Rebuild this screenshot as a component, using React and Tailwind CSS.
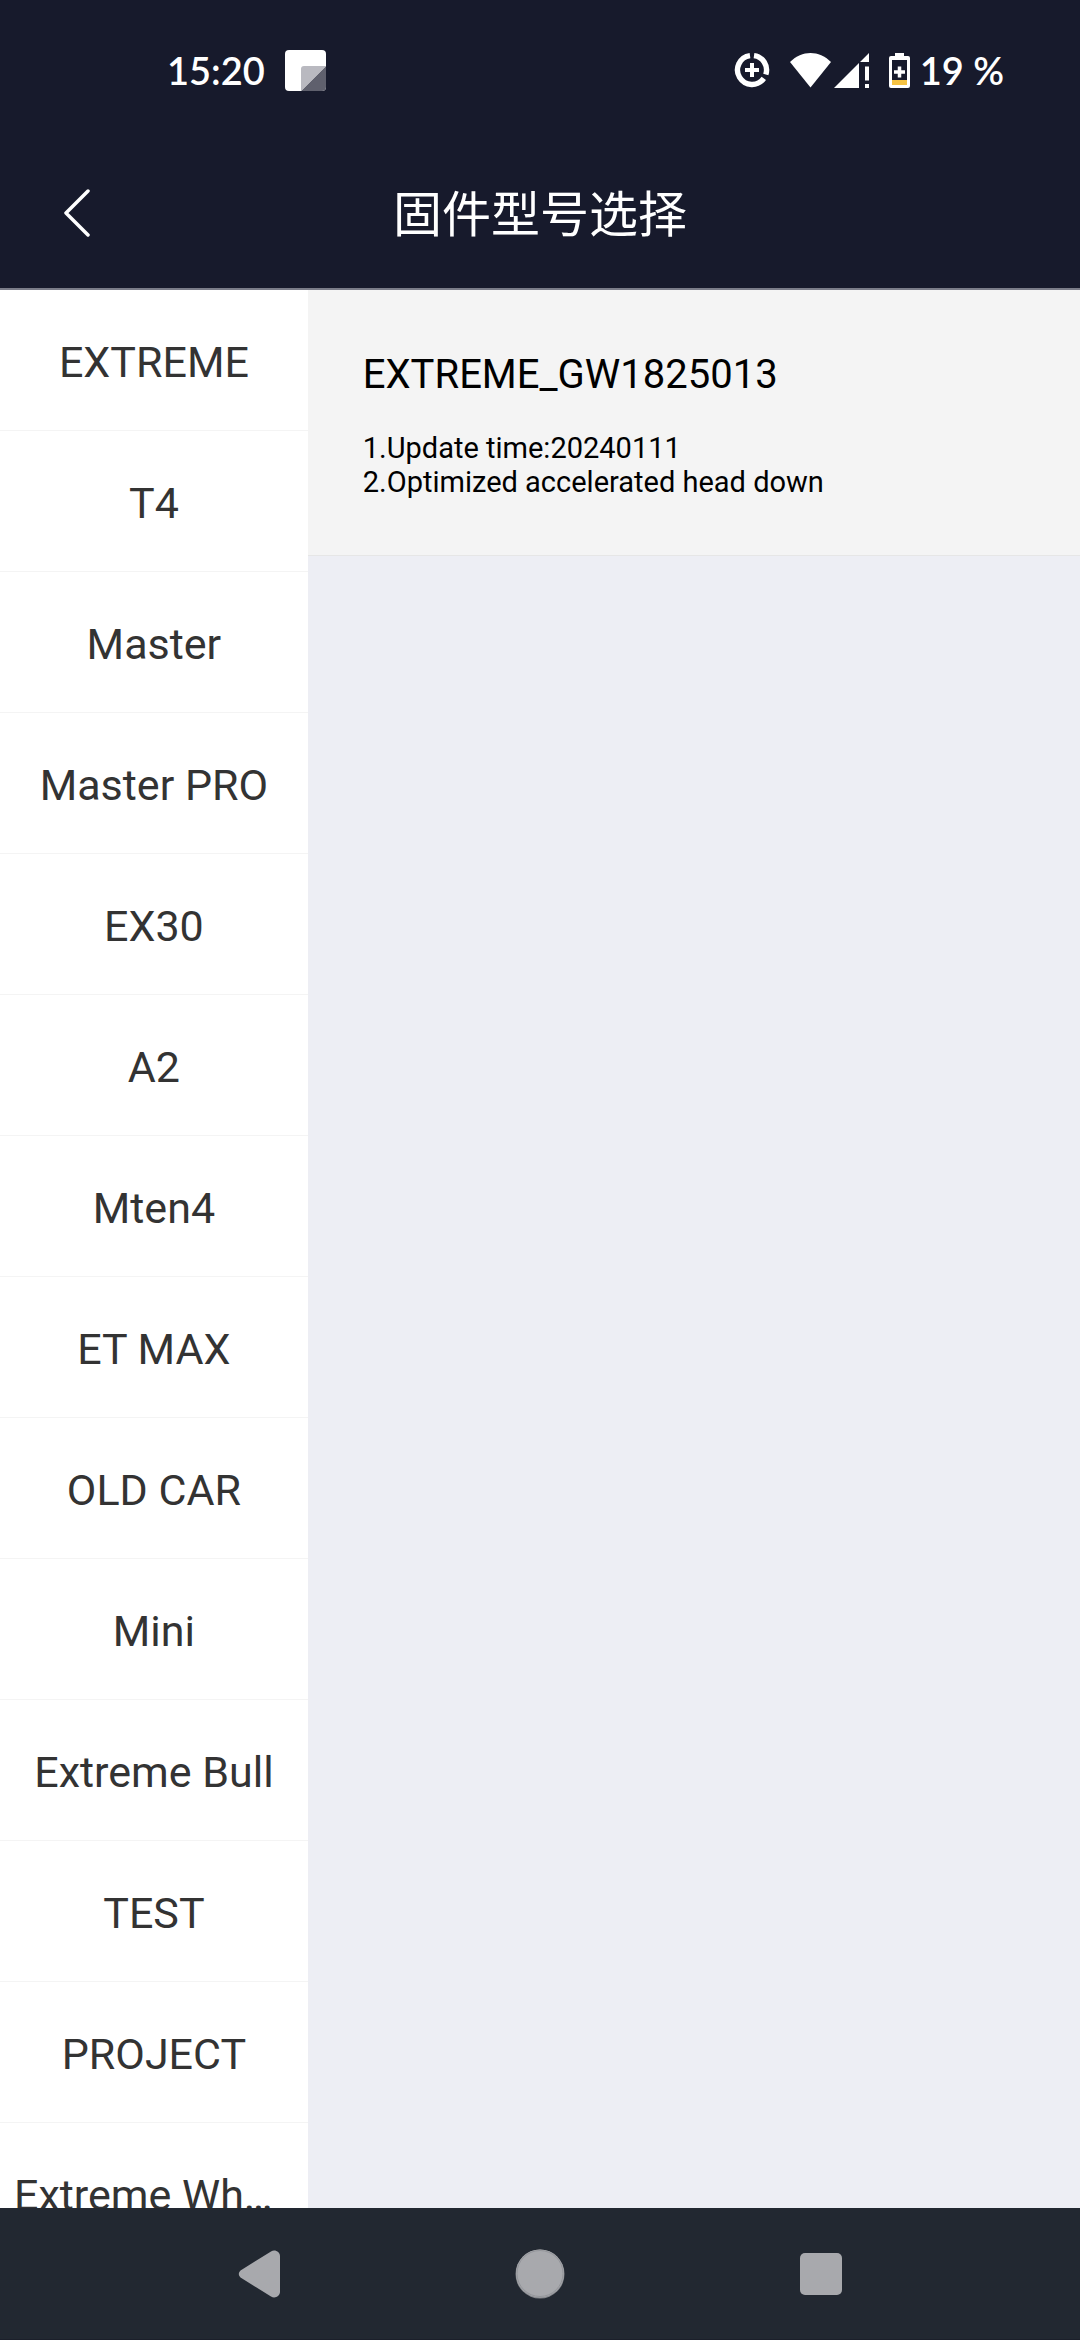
import React, { useState } from 'react';

const models = [
  'EXTREME',
  'T4',
  'Master',
  'Master PRO',
  'EX30',
  'A2',
  'Mten4',
  'ET MAX',
  'OLD CAR',
  'Mini',
  'Extreme Bull',
  'TEST',
  'PROJECT',
  'Extreme Wheel',
];

const firmwares = {
  EXTREME: [
    {
      name: 'EXTREME_GW1825013',
      notes: ['1.Update time:20240111', '2.Optimized accelerated head down'],
    },
  ],
};

const StatusBar = () => (
  <div className="flex h-[138px] shrink-0 items-center justify-between pt-[2px] pr-[76px] pl-[167px] text-white">
    <div className="flex items-center gap-5">
      <span className="font-['Lato',sans-serif] text-[38px] leading-none font-semibold">15:20</span>
      <svg width="41" height="41" viewBox="0 0 41 41">
        <rect width="41" height="41" rx="4" fill="#fff" />
        <path d="M41 16V37a4 4 0 0 1-4 4H16z" fill="#5f606d" />
        <path d="M16 41V19a3 3 0 0 1 3-3H41z" fill="#b9b9c0" />
      </svg>
    </div>

    <div className="flex items-center">
      {/* data saver */}
      <svg className="mr-5" width="36" height="36" viewBox="0 0 36 36" fill="none" stroke="#fff">
        <path d="M20 3.6A14.5 14.5 0 0 1 31.8 22.5M29.8 26.4A14.5 14.5 0 1 1 16 3.6" strokeWidth="5.4" />
        <path d="M18 11v14M11 18h14" strokeWidth="4" />
      </svg>
      {/* wifi */}
      <svg className="mr-[3px]" width="41" height="35" viewBox="0 0 41 35">
        <path d="M0 9C12-3 29-3 41 9L20.500 34.500z" fill="#fff" />
      </svg>
      {/* mobile signal */}
      <svg className="mr-5" width="35" height="35" viewBox="0 0 35 35" fill="#fff">
        <path d="M35 0v9h-9zM25 10v25H0zM31 13.500h4v14h-4zM31 31h4v4h-4z" />
      </svg>
      {/* battery */}
      <svg className="mr-[10px]" width="21" height="35" viewBox="0 0 21 35">
        <path d="M6 0h9v3h4a2 2 0 0 1 2 2v28a2 2 0 0 1-2 2H2a2 2 0 0 1-2-2V5a2 2 0 0 1 2-2h4z" fill="#fff" />
        <path d="M3 7h15v20H3z" fill="#171a2c" />
        <path d="M3 27h15v5H3z" fill="#f5c243" />
        <path d="M10.500 13.500v11M5 19h11" stroke="#fff" strokeWidth="3.500" />
      </svg>
      <span className="font-['Lato',sans-serif] text-[38px] leading-none font-semibold">19 %</span>
    </div>
  </div>
);

const App = () => {
  const [selected, setSelected] = useState('EXTREME');
  const items = firmwares[selected] || [];

  return (
    <div className="flex h-screen flex-col overflow-hidden bg-[#edeef4] font-['Roboto','Noto_Sans_CJK_SC',sans-serif]">
      <header className="shrink-0 border-b-2 border-[#7b7d89] bg-[#171a2c]">
        <StatusBar />
        <div className="grid h-[150px] grid-cols-[1fr_auto_1fr] items-center">
          <button type="button" aria-label="Back" className="flex h-full w-[154px] items-center pl-16">
            <svg width="27" height="48" viewBox="0 0 27 48" fill="none" stroke="#fff" strokeWidth="3.500" strokeLinecap="round" strokeLinejoin="round">
              <path d="M24 2 2 24l22 22" />
            </svg>
          </button>
          <h1 className="pt-1 text-[49px] leading-none text-white">固件型号选择</h1>
        </div>
      </header>

      <main className="flex min-h-0 flex-1">
        <ul className="w-[28.5%] shrink-0 overflow-hidden bg-white">
          {models.map((model) => (
            <li key={model} className="border-b border-[#f4f4f4]">
              <button
                type="button"
                onClick={() => setSelected(model)}
                className="block h-[140px] w-full truncate px-[14px] pt-1 text-center text-[43px] text-[#333]"
              >
                {model}
              </button>
            </li>
          ))}
        </ul>

        <section className="min-w-0 flex-1">
          {items.map((item) => (
            <article key={item.name} className="border-b border-[#e6e6e6] bg-[#f4f4f4] px-[55px] pt-[61px] pb-[56px] text-black">
              <h2 className="text-[40px] leading-[48px]">{item.name}</h2>
              <div className="mt-8 text-[29px] leading-[34px]">
                {item.notes.map((note) => (
                  <p key={note}>{note}</p>
                ))}
              </div>
            </article>
          ))}
        </section>
      </main>

      <nav className="flex h-[132px] shrink-0 justify-center border-b border-[#1b1f2a] bg-[#222831]">
        <button type="button" aria-label="Back" className="flex w-[26%] items-center justify-center">
          <svg width="42" height="48" viewBox="0 0 42 48">
            <path d="M33 1.500 2.500 20.500Q-1 24 2.500 27.500L33 46.500C37 49 42 46 42 42V6C42 2 37-1 33 1.500z" fill="#a8a9ad" />
          </svg>
        </button>
        <button type="button" aria-label="Home" className="flex w-[26%] items-center justify-center">
          <svg width="50" height="50" viewBox="0 0 50 50">
            <circle cx="25" cy="25" r="24.500" fill="#85878c" />
            <circle cx="25" cy="24.500" r="24" fill="#a8a9ad" />
            <circle cx="25" cy="24.500" r="23" fill="none" stroke="#93959a" />
          </svg>
        </button>
        <button type="button" aria-label="Recent apps" className="flex w-[26%] items-center justify-center">
          <svg width="42" height="42" viewBox="0 0 42 42">
            <rect width="42" height="42" rx="5" fill="#a8a9ad" />
          </svg>
        </button>
      </nav>
    </div>
  );
};

export default App;
